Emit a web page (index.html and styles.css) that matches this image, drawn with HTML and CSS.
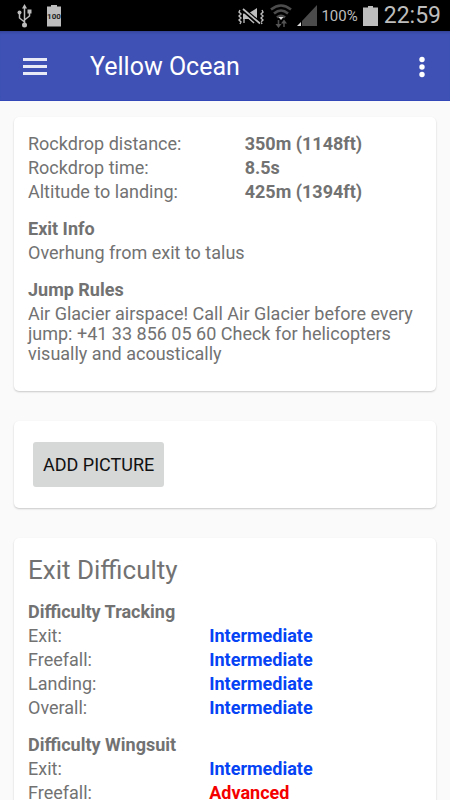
FILE: index.html
```html
<!DOCTYPE html>
<html lang="en">
<head>
<meta charset="utf-8">
<meta name="viewport" content="width=device-width, initial-scale=1">
<title>Yellow Ocean</title>
<link rel="stylesheet" href="styles.css">
</head>
<body>
<div class="status">
  <svg class="usb" width="15" height="24" viewBox="0 0 15 24" fill="none" stroke="#bdbdbd" stroke-width="1.500" aria-hidden="true">
    <path d="M7.500 3v18M7.500 18L2.500 14V9M7.500 16l5-4V8"/>
    <path d="M7.500 0l2.500 4.500H5z" fill="#bdbdbd" stroke="none"/>
    <circle cx="7.500" cy="21" r="2.500" fill="#bdbdbd" stroke="none"/>
    <circle cx="2.500" cy="8.500" r="2" fill="#bdbdbd" stroke="none"/>
    <path d="M10.500 5.500h4v4h-4z" fill="#bdbdbd" stroke="none"/>
  </svg>
  <span class="battery-level">100</span>
  <div class="indicators">
    <svg width="26" height="20" viewBox="0 0 26 20" fill="none" stroke="#bdbdbd" aria-hidden="true">
      <path d="M2 4l-1 2 2 2-2 2 2 2-2 2 2 2-1 2M24 4l1 2-2 2 2 2-2 2 2 2-2 2 1 2" stroke-width="1.400"/>
      <path d="M5 7h6l8-5v16l-8-5H5z" fill="#bdbdbd" stroke="none"/>
      <path d="M4 3l18 15" stroke="#000" stroke-width="5"/>
      <path d="M5 3l17 14.500" stroke-width="1.700"/>
      <path d="M6 8v9M6 8l10 9" stroke-width="1.300"/>
    </svg>
    <svg class="wifi" width="22" height="24" viewBox="0 0 22 24" fill="none" stroke="#4c4c4c" stroke-width="2.600" aria-hidden="true">
      <path d="M1 5.500q10-8 20 0M4 9.500q7-6 14 0M7 13.500q4-3.500 8 0"/>
      <path d="M8.500 13h5L11 16z" fill="#ddd" stroke="none"/>
      <path d="M8.500 16v6M14 23v-6" stroke-width="1.600"/>
      <path d="M5.500 20h6l-3 4zM11 19.500h6l-3-4z" fill="#555" stroke="none"/>
    </svg>
    <svg class="signal" width="20" height="21" viewBox="0 0 20 21" aria-hidden="true">
      <path d="M20 0v21H5v-5z" fill="#4b4b4b"/>
      <path d="M4 17v4H0z" fill="#ddd"/>
    </svg>
    <span class="percent">100%</span>
    <svg class="battery" width="15" height="20" viewBox="0 0 15 20" fill="#bdbdbd" aria-hidden="true">
      <path d="M5 0h5v1.500h5V20H0V1.500h5z"/>
    </svg>
    <span class="clock">22:59</span>
  </div>
</div>
<header class="appbar">
  <button class="icon-button" type="button" aria-label="Open menu">
    <svg width="24" height="18" viewBox="0 0 24 18" fill="#e8eaf6"><path d="M0 0h24v3H0zM0 7h24v3H0zM0 14h24v3H0z"/></svg>
  </button>
  <h1>Yellow Ocean</h1>
  <button class="icon-button" type="button" aria-label="More options">
    <svg width="6" height="22" viewBox="0 0 6 22" fill="#fff"><circle cx="3" cy="3.500" r="2.700"/><circle cx="3" cy="11" r="2.700"/><circle cx="3" cy="18.500" r="2.700"/></svg>
  </button>
</header>
<main>
  <section class="card info">
    <table class="facts">
      <tr><th scope="row">Rockdrop distance:</th><td>350m (1148ft)</td></tr>
      <tr><th scope="row">Rockdrop time:</th><td>8.5s</td></tr>
      <tr><th scope="row">Altitude to landing:</th><td>425m (1394ft)</td></tr>
    </table>
    <h3>Exit Info</h3>
    <p>Overhung from exit to talus</p>
    <h3>Jump Rules</h3>
    <p>Air Glacier airspace! Call Air Glacier before every jump: +41 33 856 05 60 Check for helicopters visually and acoustically</p>
  </section>
  <section class="card pictures">
    <button class="add" type="button">ADD PICTURE</button>
  </section>
  <section class="card difficulty">
    <h2>Exit Difficulty</h2>
    <h3>Difficulty Tracking</h3>
    <table class="ratings">
      <tr><th scope="row">Exit:</th><td>Intermediate</td></tr>
      <tr><th scope="row">Freefall:</th><td>Intermediate</td></tr>
      <tr><th scope="row">Landing:</th><td>Intermediate</td></tr>
      <tr><th scope="row">Overall:</th><td>Intermediate</td></tr>
    </table>
    <h3>Difficulty Wingsuit</h3>
    <table class="ratings">
      <tr><th scope="row">Exit:</th><td>Intermediate</td></tr>
      <tr><th scope="row">Freefall:</th><td class="advanced">Advanced</td></tr>
    </table>
  </section>
</main>
</body>
</html>
```
FILE: styles.css
```css
* {
  box-sizing: border-box;
}

body {
  margin: 0;
  height: 100vh;
  display: flex;
  flex-direction: column;
  background: #fafafa;
  color: #727272;
  font: 18px/24px Roboto, sans-serif;
}

h1, h2, h3, p {
  margin: 0;
}

svg {
  display: block;
  flex: none;
}

.status {
  flex: none;
  display: flex;
  align-items: center;
  height: 31px;
  padding: 0 9px 0 17px;
  background: #000;
  color: #bdbdbd;
}

.battery-level {
  display: flex;
  justify-content: center;
  width: 14px;
  height: 22px;
  margin-left: 15px;
  background: #bdbdbd;
  clip-path: polygon(0 2px, 4px 2px, 4px 0, 10px 0, 10px 2px, 100% 2px, 100% 100%, 0 100%);
  color: #222;
  font-size: 8px;
  font-weight: 700;
  line-height: 24px;
}

.indicators {
  display: flex;
  align-items: center;
  margin-left: auto;
}

.wifi {
  margin-left: 6px;
}

.signal {
  margin-left: 5px;
}

.percent {
  margin-left: 4px;
  font-size: 15px;
}

.battery {
  margin-left: 5px;
}

.clock {
  margin-left: 6px;
  font-size: 23px;
}

.appbar {
  flex: none;
  display: flex;
  align-items: center;
  height: 70px;
  padding: 2px 13px 0 11px;
  background: #3f51b5;
  border-bottom: 1px solid #3448b8;
  box-shadow: inset 0 3px 3px -2px #303f8f;
  color: #fff;
}

.appbar h1 {
  flex: 1;
  margin-left: 31px;
  font-size: 25px;
  font-weight: 400;
  line-height: 32px;
}

.icon-button {
  display: flex;
  align-items: center;
  justify-content: center;
  min-width: 30px;
  height: 48px;
  padding: 0 12px;
  border: 0;
  background: none;
}

main {
  flex: 1;
  min-height: 0;
  overflow-y: auto;
  scrollbar-width: none;
  display: flex;
  flex-direction: column;
  gap: 30px;
  padding: 16px 14px 0;
}

.card {
  flex: none;
  padding: 15px 14px;
  border-radius: 5px;
  background: #fff;
  box-shadow: 0 1px 2px rgba(0, 0, 0, 0.2);
}

.info {
  padding-bottom: 25px;
}

.pictures {
  padding: 21px 19px;
}

table {
  width: 100%;
  table-layout: fixed;
  border-collapse: collapse;
}

th, td {
  padding: 0;
  text-align: left;
}

th {
  font-weight: 400;
}

td {
  font-weight: 700;
}

.facts th {
  width: 55%;
}

.ratings th {
  width: 46%;
}

.ratings td {
  color: #0543f5;
}

.ratings .advanced {
  color: #f40000;
}

h3 {
  margin-top: 13px;
  font-size: 18px;
  font-weight: 700;
}

p {
  padding: 2px 0;
  line-height: 20px;
}

.add {
  display: block;
  height: 45px;
  padding: 0 10px;
  border: 0;
  border-radius: 3px;
  background: #d6d7d7;
  color: #111;
  font: 18px/24px Roboto, sans-serif;
}

h2 {
  font-size: 26px;
  font-weight: 400;
  line-height: 34px;
}
```
